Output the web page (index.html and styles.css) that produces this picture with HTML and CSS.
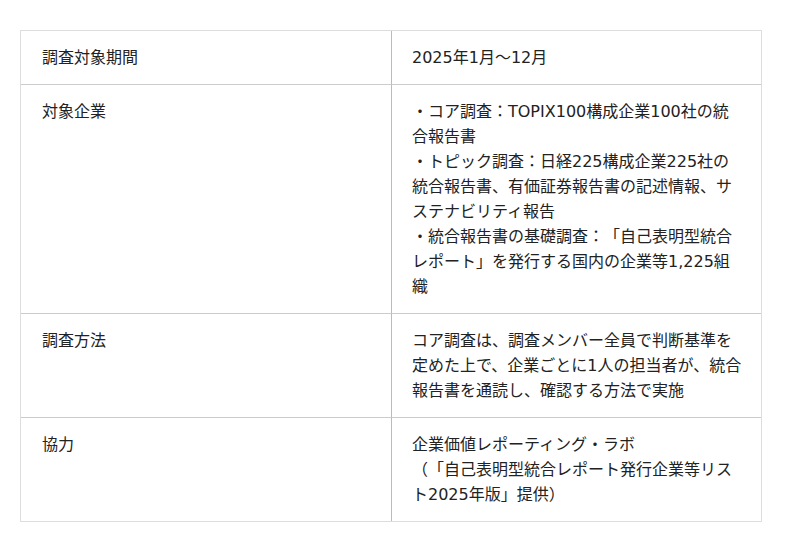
FILE: index.html
```html
<!DOCTYPE html>
<html lang="ja">
<head>
<meta charset="utf-8">
<link rel="stylesheet" href="styles.css">
</head>
<body>
<table class="info">
  <colgroup><col class="c1"><col class="c2"></colgroup>
  <tbody>
    <tr>
      <td>調査対象期間</td>
      <td>2025年1月～12月</td>
    </tr>
    <tr>
      <td>対象企業</td>
      <td>・コア調査：TOPIX100構成企業100社の統合報告書<br>・トピック調査：日経225構成企業225社の統合報告書、有価証券報告書の記述情報、サステナビリティ報告<br>・統合報告書の基礎調査：「自己表明型統合レポート」を発行する国内の企業等1,225組織</td>
    </tr>
    <tr>
      <td>調査方法</td>
      <td>コア調査は、調査メンバー全員で判断基準を定めた上で、企業ごとに1人の担当者が、統合報告書を通読し、確認する方法で実施</td>
    </tr>
    <tr>
      <td>協力</td>
      <td>企業価値レポーティング・ラボ<br>（「自己表明型統合レポート発行企業等リスト2025年版」提供）</td>
    </tr>
  </tbody>
</table>
</body>
</html>
```
FILE: styles.css
```css
html, body {
  margin: 0;
  padding: 0;
  background: #fff;
}
body {
  padding: 30px 0 0 20px;
  font-family: "DejaVu Sans", "Noto Sans CJK JP", sans-serif;
  font-size: 16px;
  line-height: 25px;
  color: #222;
  text-spacing-trim: space-all;
}
.info {
  border-collapse: separate;
  border-spacing: 0;
  table-layout: fixed;
  width: 742px;
  border: 1px solid #ddd;
}
.c1 { width: 370px; }
.c2 { width: 370px; }
.info td {
  vertical-align: top;
  padding: 14px 20px 14px 21px;
  word-break: break-all;
}
.info tr + tr td {
  border-top: 1px solid #ccc;
}
.info td + td {
  border-left: 1px solid #bbb;
  padding-left: 20px;
  padding-right: 19px;
}
```
